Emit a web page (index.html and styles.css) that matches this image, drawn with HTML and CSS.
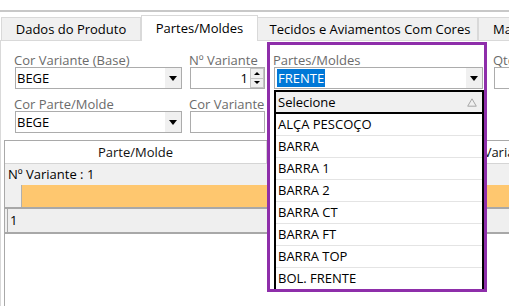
FILE: index.html
```html
<!DOCTYPE html>
<html lang="pt">
  <head>
    <meta charset="UTF-8" />
    <title>Partes/Moldes</title>
    <link rel="stylesheet" href="styles.css">
  </head>
  <body>
    <div class="topbar"></div>
    <div class="tabs">
      <div class="tab tab-produto">Dados do Produto</div>
      <div class="tab tab-partes active">Partes/Moldes</div>
      <div class="tab tab-tecidos">Tecidos e Aviamentos Com Cores</div>
      <div class="tab tab-mat">Materiais</div>
    </div>

    <div class="panel">
      <div class="row row1">
        <div class="field f-wide">
          <span class="label">Cor Variante (Base)</span>
          <div class="combo"><span class="value">BEGE</span><span class="drop"><i class="tri"></i></span></div>
        </div>
        <div class="field f-num">
          <span class="label">Nº Variante</span>
          <div class="spin">
            <span class="value">1</span>
            <span class="spin-btns"><span class="sb"><i class="tri-up"></i></span><span class="sb"><i class="tri-down"></i></span></span>
          </div>
        </div>
        <div class="field f-gap"></div>
        <div class="field f-qtd">
          <span class="label">Qtde</span>
          <div class="combo"></div>
        </div>
      </div>
      <div class="row row2">
        <div class="field f-wide">
          <span class="label">Cor Parte/Molde</span>
          <div class="combo"><span class="value">BEGE</span><span class="drop"><i class="tri"></i></span></div>
        </div>
        <div class="field f-num">
          <span class="label">Cor Variante</span>
          <div class="combo"></div>
        </div>
      </div>

      <div class="grid">
        <div class="grid-head">
          <div class="hcell c1">Parte/Molde</div>
          <div class="hcell c2">Nº Variante</div>
        </div>
        <div class="group">Nº Variante : 1</div>
        <div class="band"><div class="indent"></div><div class="orange"></div></div>
        <div class="datarow"><div class="cell">1</div></div>
      </div>
    </div>

    <!-- campo destacado com a lista aberta -->
    <div class="popup">
      <span class="label">Partes/Moldes</span>
      <div class="combo combo-part"><span class="value"><span class="sel">FRENTE</span></span><span class="drop"><i class="tri"></i></span></div>
      <div class="list">
        <div class="list-head">
          <span>Selecione</span>
          <svg width="10" height="9" viewBox="0 0 10 9"><polygon points="5,0.8 9.3,8.2 0.7,8.2" fill="none" stroke="#a6a6a6" stroke-width="1"/></svg>
        </div>
        <div class="list-item">ALÇA PESCOÇO</div>
        <div class="list-item">BARRA</div>
        <div class="list-item">BARRA 1</div>
        <div class="list-item">BARRA 2</div>
        <div class="list-item">BARRA CT</div>
        <div class="list-item">BARRA FT</div>
        <div class="list-item">BARRA TOP</div>
        <div class="list-item">BOL. FRENTE</div>
      </div>
    </div>
  </body>
</html>
```

FILE: styles.css
```css
body {
  margin: 0;
  width: 509px;
  height: 306px;
  overflow: hidden;
  position: relative;
  background: #fff;
  color: #000;
  font-family: "Open Sans", "Noto Sans", sans-serif;
  font-size: 13px;
}
.topbar {
  height: 10px;
  border-bottom: 2px solid #c8c8c8;
}

/* abas */
.tabs {
  display: flex;
  align-items: flex-end;
  height: 28px;
  padding-left: 1px;
}
.tab {
  flex: none;
  box-sizing: border-box;
  height: 23px;
  line-height: 22px;
  background: #f0f0f0;
  border: 1px solid #d9d9d9;
  border-bottom: none;
  text-align: center;
  white-space: nowrap;
  overflow: hidden;
}
.tab-produto { width: 140px; }
.tab-partes { width: 117px; }
.tab-tecidos { width: 220px; border-left: none; padding-left: 5px; }
.tab-mat { width: 100px; text-align: left; padding-left: 14px; }
.tab.active {
  height: 26px;
  margin-bottom: -1px;
  background: #fff;
  position: relative;
  z-index: 1;
  line-height: 24px;
}

.panel {
  box-sizing: border-box;
  height: 266px;
  border-top: 1px solid #d9d9d9;
  border-left: 1px solid #d9d9d9;
}

/* formulario */
.row {
  display: flex;
  padding-left: 14px;
}
.row1 { padding-top: 12px; }
.row2 { margin-top: 8px; }
.field { flex: none; }
.f-wide { width: 167px; }
.f-num { width: 75px; margin-left: 8px; }
.f-gap { width: 229px; }
.f-qtd { width: 80px; }
.label {
  display: block;
  height: 14px;
  line-height: 14px;
  margin-left: -1px;
  color: #6b6b6b;
  white-space: nowrap;
}
.combo {
  box-sizing: border-box;
  height: 22px;
  border: 1px solid #acacac;
  background: #fff;
  display: flex;
  align-items: center;
}
.combo .value {
  flex: 1;
  padding-left: 1px;
  white-space: nowrap;
}
.drop {
  width: 16px;
  height: 20px;
  background: #f0f0f0;
  display: flex;
  align-items: center;
  justify-content: center;
}
.tri {
  width: 0;
  height: 0;
  border-left: 4px solid transparent;
  border-right: 4px solid transparent;
  border-top: 5px solid #000;
}

.spin {
  box-sizing: border-box;
  height: 22px;
  border: 1px solid #acacac;
  display: flex;
  align-items: center;
}
.spin .value {
  flex: 1;
  text-align: right;
  padding-right: 2px;
}
.spin-btns {
  width: 14px;
  height: 20px;
  display: flex;
  flex-direction: column;
}
.sb {
  flex: 1;
  box-sizing: border-box;
  border: 1px solid #c4c4c4;
  background: #f0f0f0;
  display: flex;
  align-items: center;
  justify-content: center;
}
.sb + .sb { border-top: none; }
.tri-up {
  border-left: 3px solid transparent;
  border-right: 3px solid transparent;
  border-bottom: 3px solid #000;
}
.tri-down {
  border-left: 3px solid transparent;
  border-right: 3px solid transparent;
  border-top: 3px solid #000;
}

/* grade */
.grid {
  margin: 7px 0 0 3px;
  height: 166px;
  border-top: 1px solid #a9a9a9;
  border-left: 1px solid #a9a9a9;
  overflow: hidden;
}
.grid-head {
  display: flex;
  height: 22px;
  border-bottom: 1px solid #d5d5d5;
}
.hcell {
  flex: none;
  line-height: 22px;
  text-align: center;
  color: #111;
  white-space: nowrap;
}
.hcell.c1 { width: 261px; border-right: 1px solid #d5d5d5; }
.hcell.c2 { width: 466px; }
.group {
  height: 21px;
  line-height: 21px;
  padding-left: 3px;
  background: #f0f0f0;
}
.band {
  display: flex;
  height: 22px;
  border-bottom: 2px solid #a8a8a8;
}
.indent {
  width: 16px;
  background: #f0f0f0;
  border-right: 1px solid #b0b0b0;
}
.orange {
  flex: 1;
  background: #fec76f;
}
.datarow {
  height: 23px;
  background: #efefef;
  border-bottom: 2px solid #a8a8a8;
  padding-left: 2px;
}
.cell {
  height: 23px;
  line-height: 23px;
  border-left: 1px solid #a8a8a8;
  padding-left: 2px;
}

/* destaque */
.popup {
  position: absolute;
  left: 267px;
  top: 42px;
  width: 220px;
  height: 250px;
  box-sizing: border-box;
  padding: 8px 0 0 4px;
  border: 3px solid #8e2eaa;
  background: #fff;
}
.combo-part { width: 209px; }
.sel {
  background: #0078d7;
  color: #fff;
  padding: 0 1px;
  margin-left: 1px;
}
.list {
  box-sizing: border-box;
  width: 210px;
  height: 199px;
  margin-top: 1px;
  border: 2px solid #000;
  border-bottom: none;
  overflow: hidden;
}
.list-head {
  height: 20px;
  line-height: 20px;
  padding: 0 5px 0 2px;
  background: #f0f0f0;
  border-bottom: 2px solid #000;
  display: flex;
  justify-content: space-between;
  align-items: center;
}
.list-item {
  height: 21px;
  line-height: 21px;
  padding-left: 2px;
  border-bottom: 1px solid #e4e4e4;
  white-space: nowrap;
}
```
